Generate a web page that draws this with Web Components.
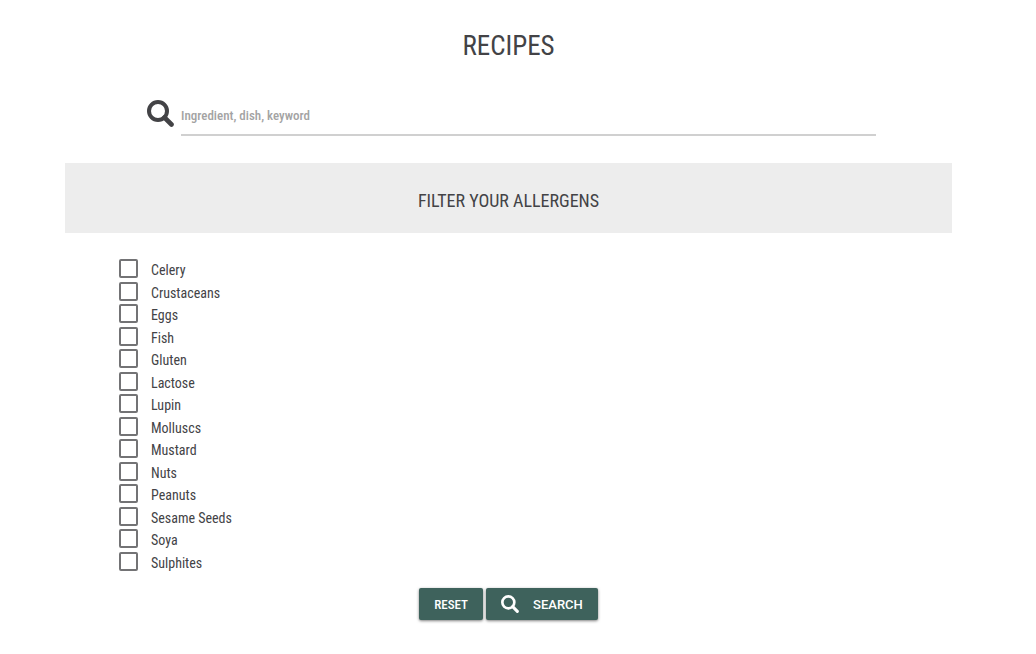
<!DOCTYPE html>
<html lang="en">
<head>
<meta charset="utf-8">
<meta name="viewport" content="width=device-width, initial-scale=1">
<title>Recipes</title>
<style>
  body { margin: 0; background: #fff; color: #434346; font-family: "Roboto Condensed", Roboto, sans-serif; font-size: 14px; }
</style>
</head>
<body>
<recipe-page></recipe-page>
<script>
class BaseElement extends HTMLElement {
  connectedCallback() {
    if (this.shadowRoot) return;
    this.attachShadow({ mode: "open" }).innerHTML = this.render();
  }
}

customElements.define("search-icon", class extends BaseElement {
  render() {
    return `<style>
      :host { display: block; flex: none; width: 27px; height: 27px; }
      svg { display: block; width: 100%; height: 100%; }
    </style>
    <svg viewBox="0 0 27 27" fill="none" stroke="currentColor" aria-hidden="true">
      <circle cx="11" cy="11" r="9" stroke-width="4"/>
      <path d="M17.5 17.5L24.5 24.5" stroke-width="4.6" stroke-linecap="round"/>
    </svg>`;
  }
});

customElements.define("search-field", class extends BaseElement {
  render() {
    return `<style>
      :host { display: flex; align-items: flex-start; gap: 7px; }
      search-icon { margin-top: 2px; }
      input { flex: 1; min-width: 0; height: 38px; box-sizing: border-box; margin: 0; padding: 0 0 2px;
        border: 0; border-bottom: 2px solid #d0d0d0; border-radius: 0; background: none; outline: 0;
        font: inherit; font-size: 13px; font-weight: 500; color: inherit; }
      input::placeholder { color: #a3a3a3; opacity: 1; }
    </style>
    <search-icon></search-icon>
    <input type="search" aria-label="Search recipes" placeholder="Ingredient, dish, keyword">`;
  }
});

customElements.define("allergen-option", class extends BaseElement {
  render() {
    return `<style>
      :host { display: block; }
      label { display: flex; align-items: flex-start; gap: 13px; line-height: 22px; }
      input { appearance: none; flex: none; box-sizing: border-box; width: 19px; height: 19px; margin: 0;
        border: 2px solid #737375; border-radius: 2px; background: #fff; }
      input:checked { background: #3e625c; }
    </style>
    <label><input type="checkbox"><span><slot></slot></span></label>`;
  }
});

customElements.define("action-button", class extends BaseElement {
  render() {
    return `<style>
      :host { display: block; font-size: 13px; font-weight: 500; }
      button { display: flex; align-items: center; gap: 14px; height: 32px; margin: 0; padding: 0 15px;
        border: 0; border-radius: 2px; background: #3e625c; color: #fff; font: inherit;
        box-shadow: 0 1px 3px rgba(0, 0, 0, .5); }
      ::slotted(search-icon) { width: 18px; height: 18px; }
    </style>
    <button type="button"><slot name="icon"></slot><slot></slot></button>`;
  }
});

customElements.define("recipe-page", class extends BaseElement {
  render() {
    const allergens = ["Celery", "Crustaceans", "Eggs", "Fish", "Gluten", "Lactose", "Lupin", "Molluscs",
      "Mustard", "Nuts", "Peanuts", "Sesame Seeds", "Soya", "Sulphites"];
    return `<style>
      :host { display: block; padding: 28px 84px 32px 65px; }
      h1, h2 { margin: 0; font-weight: 400; text-align: center; }
      h1 { font-size: 27px; line-height: 36px; }
      search-field { margin: 34px 76px 0 82px; }
      h2 { margin-top: 27px; padding: 26px 0 20px; background: #ededed; font-size: 18px; line-height: 24px; }
      .list { display: grid; grid-auto-rows: 1fr; height: 315px; margin: 26px 54px 0; }
      allergen-option { min-height: 0; }
      .actions { display: flex; justify-content: center; gap: 3px; margin-top: 14px; }
      .wide { font-family: Roboto, sans-serif; }
    </style>
    <main>
      <h1>RECIPES</h1>
      <search-field></search-field>
      <h2>FILTER YOUR ALLERGENS</h2>
      <div class="list">${allergens.map(a => `<allergen-option>${a}</allergen-option>`).join("")}</div>
      <div class="actions">
        <action-button>RESET</action-button>
        <action-button class="wide"><search-icon slot="icon"></search-icon>SEARCH</action-button>
      </div>
    </main>`;
  }
});
</script>
</body>
</html>
